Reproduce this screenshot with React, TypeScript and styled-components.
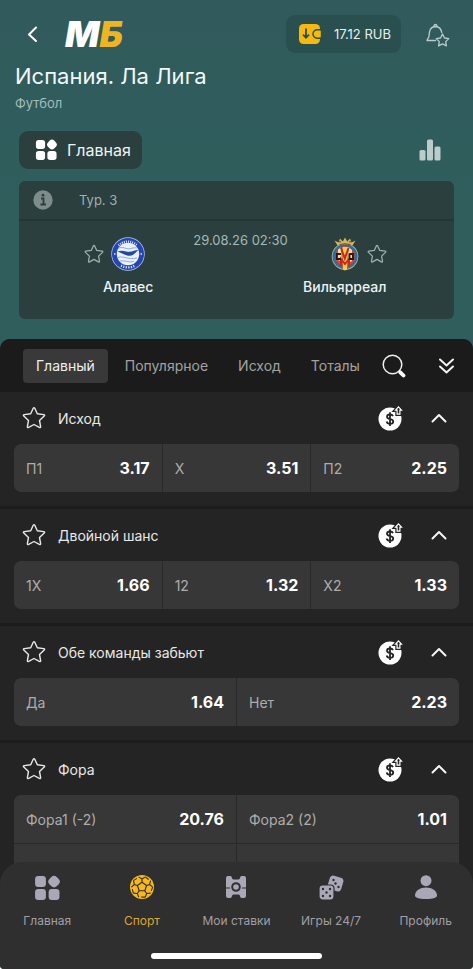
import React from 'react';
import styled, { createGlobalStyle, css } from 'styled-components';

const GlobalStyle = createGlobalStyle`
  *, *::before, *::after { box-sizing: border-box; }
  body { margin: 0; background: #fff; font-family: Inter, "Noto Sans", sans-serif; }
  button { font: inherit; color: inherit; background: none; border: 0; padding: 0; cursor: pointer; }
  h1, h2, p { margin: 0; font-weight: 400; }
  svg { display: block; flex: none; }
`;

const Page = styled.div`
  display: flex;
  flex-direction: column;
  height: 100vh;
  overflow: hidden;
  border-radius: 0 0 4px 4px;
  background: linear-gradient(#315a5b, #2f5e5d 200px, #2f5e5d);
  color: #fff;
`;

const TopBar = styled.header`
  display: flex;
  align-items: center;
  height: 53px;
  padding: 15px 23px 0 22px;
`;

const IconButton = styled.button`
  display: grid;
  place-items: center;
  flex: none;
`;

const Logo = styled.a`
  display: flex;
  margin-left: 22px;
  font-size: 36px;
  line-height: 38px;
  font-weight: 900;
  font-style: italic;
  color: #fff;
  text-decoration: none;
`;

const LogoAccent = styled.span`
  color: #eeb422;
`;

const Balance = styled.button`
  display: flex;
  align-items: center;
  gap: 12px;
  height: 38px;
  margin: 0 24px 0 auto;
  padding: 0 10px 0 12px;
  border-radius: 9px;
  background: #29504f;
  font-size: 13px;
  color: #e4eeee;
`;

const Heading = styled.div`
  padding: 9px 15px 0;
`;

const Title = styled.h1`
  font-size: 22px;
  line-height: 28px;
  color: #f0f8f8;
`;

const Sport = styled.p`
  padding-top: 5px;
  font-size: 13px;
  line-height: 16px;
  color: #a3bcbb;
`;

const ModeRow = styled.div`
  display: flex;
  align-items: center;
  justify-content: space-between;
  padding: 20px 32px 12px 19px;
`;

const ModeButton = styled.button`
  display: flex;
  align-items: center;
  gap: 10px;
  height: 38px;
  padding: 0 11px 0 16px;
  border-radius: 9px;
  background: #2a3f3e;
  font-size: 16px;
  color: #eef4f4;
`;

const MatchCard = styled.section`
  margin: 0 19px 20px;
  border-radius: 6px;
  background: #2a3f3e;
`;

const Round = styled.div`
  display: flex;
  align-items: center;
  gap: 26px;
  height: 40px;
  padding: 0 14px;
  border-bottom: 2px solid #253635;
  font-size: 13px;
  color: #9fb0af;
`;

const Teams = styled.div`
  display: flex;
  justify-content: center;
  gap: 12px;
  height: 98px;
  padding-top: 10px;
`;

const Team = styled.div`
  display: flex;
  flex-direction: column;
  align-items: center;
  width: 90px;
`;

const TeamBadges = styled.div<{ $away?: boolean }>`
  display: flex;
  align-items: center;
  gap: 7px;
  height: 46px;
  ${({ $away }) => ($away ? css`padding-left: 28px;` : css`padding-right: 28px;`)}
`;

const TeamName = styled.span`
  font-size: 14px;
  line-height: 20px;
  font-weight: 500;
  color: #edf2f2;
`;

const Kickoff = styled.time`
  padding-left: 8px;
  text-align: center;
  font-size: 13px;
  line-height: 18px;
  color: #a7b7b6;
  white-space: nowrap;
`;

const Sheet = styled.main`
  flex: 1;
  min-height: 0;
  overflow: hidden;
  border-radius: 10px 10px 0 0;
  background: #242424;
`;

const TabBar = styled.nav`
  display: flex;
  align-items: center;
  height: 53px;
  padding: 0 18px 0 23px;
  background: #1b1b1b;
`;

const Tabs = styled.div`
  display: flex;
  flex: 1;
  gap: 4px;
  overflow: hidden;
`;

const Tab = styled.button<{ $active?: boolean }>`
  flex: none;
  height: 34px;
  padding: 0 13px;
  border-radius: 4px;
  font-size: 14px;
  color: ${({ $active }) => ($active ? '#eee' : '#a2a2a2')};
  background: ${({ $active }) => ($active ? '#393939' : 'transparent')};
`;

const TabTools = styled.div`
  display: flex;
  align-items: center;
  gap: 32px;
`;

const Market = styled.section`
  padding: 0 14px 14px;
  border-bottom: 3px solid #1c1c1c;
`;

const MarketHead = styled.div`
  display: flex;
  align-items: center;
  gap: 12px;
  height: 52px;
  padding: 0 12px 0 8px;
`;

const MarketTitle = styled.h2`
  flex: 1;
  font-size: 14px;
  color: #e8e8e8;
`;

const MarketTools = styled.div`
  display: flex;
  align-items: center;
  gap: 28px;
`;

const Outcomes = styled.div<{ $columns: number }>`
  display: grid;
  grid-template-columns: repeat(${({ $columns }) => $columns}, 1fr);
  gap: 1px;
  border-radius: 7px;
  overflow: hidden;
  background: #292929;
`;

const Outcome = styled.button`
  display: flex;
  align-items: center;
  justify-content: space-between;
  height: 48px;
  padding: 0 12px;
  background: #373737;
`;

const OutcomeName = styled.span`
  font-size: 14px;
  color: #adadad;
`;

const Odds = styled.span`
  font-size: 16px;
  font-weight: 700;
  color: #fff;
`;

const BottomNav = styled.nav`
  position: relative;
  z-index: 1;
  flex: none;
  margin-top: -22px;
  border-radius: 22px 22px 0 0;
  background: #2f2f2f;
`;

const NavItems = styled.div`
  display: grid;
  grid-template-columns: repeat(5, 1fr);
  padding-top: 13px;
`;

const NavLink = styled.a<{ $active?: boolean }>`
  display: flex;
  flex-direction: column;
  align-items: center;
  gap: 14px;
  font-size: 12px;
  line-height: 16px;
  text-decoration: none;
  white-space: nowrap;
  color: ${({ $active }) => ($active ? '#dba735' : '#a09fa5')};
`;

const HomeIndicator = styled.div`
  width: 36%;
  height: 6px;
  margin: 24px auto 10px;
  border-radius: 3px;
  background: #fff;
`;

const STAR = 'M11.200 2.300q.8-1.400 1.600 0L15.300 7.700l6.400.9q1.600.3.500 1.500L17.500 14.500l1.100 6q.2 1.600-1.300.9L12 18.500l-5.300 2.900q-1.500.7-1.300-.9l1.100-6L1.800 10.100q-1.100-1.200.5-1.500l6.400-.9z';

const StarIcon = ({ size, color, width }: { size: number; color: string; width: number }) => (
  <svg width={size} height={size} viewBox="0 0 24 24" fill="none" stroke={color} strokeWidth={width} strokeLinejoin="round">
    <path d={STAR} />
  </svg>
);

const BackIcon = () => (
  <svg width="21" height="24" viewBox="0 0 21 24" fill="none" stroke="#fff" strokeWidth="2" strokeLinecap="round" strokeLinejoin="round">
    <path d="M14 5.500l-7 7 7 6.500" />
  </svg>
);

const WalletIcon = () => (
  <svg width="24" height="22" viewBox="0 0 24 22">
    <rect x="1" y="1" width="21" height="20" rx="4.500" fill="#f8b90f" />
    <path d="M8 5.500v9M5 11.700l3 3 3-3" fill="none" stroke="#29504f" strokeWidth="1.800" />
    <path d="M22 6.800h-2.800a4.200 4.200 0 0 0 0 8.400H22q1.500 0 1.500-1.500V8.300q0-1.500-1.500-1.500z" fill="#f8b90f" stroke="#29504f" strokeWidth="1.400" />
  </svg>
);

const BellIcon = () => (
  <svg width="25" height="25" viewBox="0 0 25 25" fill="none" stroke="#b9cccb" strokeWidth="1.300" strokeLinecap="round" strokeLinejoin="round">
    <path d="M10.500 18.500H2c.2-1.700 1.800-2.300 2-4.500C4.300 9 5 5 10.500 4.500c4 .2 5.700 2.700 6.200 6" />
    <path d="M9 4c.2-2 2.800-2 3 0" />
    <path d="M17.500 12l2 4 4.300.6-3.100 3 .7 4.300-3.900-2-3.900 2 .7-4.300-3.100-3 4.300-.6z" />
  </svg>
);

const GridIcon = ({ size, color }: { size: number; color: string }) => (
  <svg width={size} height={size} viewBox="0 0 24 24" fill={color}>
    <rect x="1" y="1" width="10" height="10" rx="3" />
    <rect x="13.700" y="1.300" width="9.600" height="9.600" rx="3.800" transform="rotate(45 18.500 6.100)" />
    <rect x="1" y="13" width="10" height="10" rx="3" />
    <rect x="13.500" y="13" width="10" height="10" rx="3" />
  </svg>
);

const ChartIcon = () => (
  <svg width="22" height="22" viewBox="0 0 22 22" fill="#bdcccb">
    <rect x="0.500" y="11" width="6" height="10.500" rx="1.500" />
    <rect x="8" y="0.500" width="6" height="21" rx="1.500" />
    <rect x="15.500" y="7.500" width="6" height="14" rx="1.500" />
  </svg>
);

const InfoIcon = () => (
  <svg width="20" height="20" viewBox="0 0 20 20">
    <circle cx="10" cy="10" r="9.700" fill="#7e8c8b" />
    <path d="M8 8.500h2.500V14M7.500 14.500h5.500" stroke="#2a3f3e" strokeWidth="1.800" fill="none" />
    <circle cx="10" cy="5.200" r="1.400" fill="#2a3f3e" />
  </svg>
);

const AlavesCrest = () => (
  <svg width="34" height="34" viewBox="0 0 34 34" role="img" aria-label="Алавес">
    <circle cx="17" cy="17" r="16.700" fill="#b9c9f2" />
    <circle cx="17" cy="17" r="16" fill="#2446b4" />
    <circle cx="17" cy="17" r="11.200" fill="#e9f0f8" />
    <path d="M6.500 14.500c5-2 8 .5 12 .3 4-.2 6-2.300 9.500-1.800-3 1-4.500 5.500-9 5.800-4 .2-7-2.500-12.500-4.300z" fill="#25489f" />
    <path d="M7 11.500c5-3 8 1.500 13 0 2-.6 4-1 6-.4M7 20.500c6-2 9 2.500 19 .5M9 24c5-1 8 2 14 .5" fill="none" stroke="#7d9bd0" strokeWidth=".8" />
    <path d="M7.600 8.600a12.900 12.900 0 0 1 18.800 0" fill="none" stroke="#dce6ff" strokeWidth="2.200" strokeDasharray="1 1.100" />
    <path d="M10 28.500a13.800 13.800 0 0 0 14 0" fill="none" stroke="#dce6ff" strokeWidth="2.400" strokeDasharray="1.200 1.300" />
    <path d="M3 17h1.500M29.500 17H31" stroke="#dce6ff" strokeWidth="1.500" />
  </svg>
);

const VillarrealCrest = () => (
  <svg width="30" height="34" viewBox="0 0 30 34" role="img" aria-label="Вильярреал">
    <circle cx="15" cy="19.500" r="13.300" fill="#b9b48a" />
    <circle cx="15" cy="19.500" r="12.500" fill="#2c6da5" />
    <path d="M15 8.500l9.500 6.500v8.500L15 33.500l-9.500-10V15z" fill="#d9452a" />
    <path d="M8 12.500l3-2 1 14.500-4-2zM18.500 10l3.500 3v11l-4 2z" fill="#ffe086" />
    <path d="M12.500 10h5.500L17 32.500l-2 1-2-1z" fill="#f8cf4d" />
    <path d="M11 11l3.800 10.500L18.500 11M11 29v-7l4 5 4-5v7" fill="none" stroke="#c9281d" strokeWidth="2" />
    <path d="M11 17H6.800v5H11M19.500 16.500v6M19.500 17h3.500v5h-3.500" fill="none" stroke="#20191c" strokeWidth="1.800" />
    <path d="M7.500 8.500L4.500 3.500l4 2L10 1.500l2.800 3L15 .5l2.200 4L20 1.500l1.500 4 4-2-3 5q-7.500-2.500-15 0z" fill="#cfb75c" />
    <path d="M9.500 7.500q5.500-1.500 11 0" stroke="#8b3c32" fill="none" />
    <circle cx="10" cy="4.700" r=".8" fill="#2a3f3e" /><circle cx="20" cy="4.700" r=".8" fill="#2a3f3e" />
  </svg>
);

const SearchIcon = () => (
  <svg width="24" height="24" viewBox="0 0 24 24" fill="none">
    <circle cx="10.500" cy="10.500" r="9.300" stroke="#eee" strokeWidth="1.500" />
    <path d="M18.300 18.300l3.200 3.200" stroke="#fff" strokeWidth="3.800" strokeLinecap="round" />
  </svg>
);

const DoubleChevronIcon = () => (
  <svg width="17" height="18" viewBox="0 0 17 18" fill="none" stroke="#f2f2f2" strokeWidth="2" strokeLinecap="round" strokeLinejoin="round">
    <path d="M2 2.500l6.500 6 6.500-6M2 9.500l6.500 6 6.500-6" />
  </svg>
);

const DollarIcon = () => (
  <svg width="25" height="26" viewBox="0 0 25 26">
    <circle cx="12" cy="14" r="11.500" fill="#fff" />
    <path d="M15 11.200c-.5-1.200-1.600-1.700-3-1.700-1.800 0-3 .9-3 2.300 0 3.300 6.200 1.400 6.200 4.600 0 1.500-1.300 2.400-3.200 2.400-1.700 0-3-.7-3.400-2.200M12 7.200v13.800" fill="none" stroke="#242424" strokeWidth="1.800" />
    <path d="M20.500 1.800l3 3.300h-1.600v4h-2.800v-4h-1.600z" fill="#242424" stroke="#242424" strokeWidth="3.600" />
    <path d="M20.500 1.800l3 3.300h-1.600v4h-2.800v-4h-1.600z" fill="#242424" stroke="#fff" strokeWidth="1.200" />
  </svg>
);

const ChevronUpIcon = () => (
  <svg width="16" height="10" viewBox="0 0 16 10" fill="none" stroke="#f5f5f5" strokeWidth="2" strokeLinecap="round" strokeLinejoin="round">
    <path d="M1.500 8.500L8 2l6.500 6.500" />
  </svg>
);

const spokes = [0, 72, 144, 216, 288];

const BallIcon = () => (
  <svg width="24" height="24" viewBox="0 0 24 24">
    <circle cx="12" cy="12" r="12" fill="#f5b91f" />
    <g fill="none" stroke="#332e24" strokeWidth="1.100" strokeLinejoin="round">
      <path d="M12 7.200l4.600 3.300-1.800 5.300H9.200l-1.800-5.300z" />
      {spokes.map((angle) => (
        <g key={angle} transform={`rotate(${angle} 12 12)`}>
          <path d="M12 7.200V4M12 4L8.600 1.900M12 4l3.400-2.100" />
          <path d="M15.400 1.900l3.200 2.600" />
        </g>
      ))}
    </g>
  </svg>
);

const TicketIcon = () => (
  <svg width="24" height="24" viewBox="0 0 24 24">
    <path d="M4 1h2.500C8 1 7.700 4.500 9.500 4.500h5C16.300 4.500 16 1 17.500 1H20q2 0 2 2v18q0 2-2 2h-2.500c-1.500 0-1.200-3.500-3-3.500h-5c-1.800 0-1.500 3.500-3 3.500H4q-2 0-2-2V3q0-2 2-2z" fill="#aaa8b7" />
    <circle cx="12" cy="12" r="3.800" fill="none" stroke="#2f2f2f" strokeWidth="2" />
    <path d="M2 13h4M18 13h4" stroke="#2f2f2f" strokeWidth="1.200" />
  </svg>
);

const DiceIcon = () => (
  <svg width="26" height="26" viewBox="0 0 26 26">
    <rect x="10.500" y="1.500" width="14" height="14" rx="3.500" transform="rotate(17 17.500 8.500)" fill="#aaa8b7" />
    <g fill="#2f2f2f">
      <circle cx="15.500" cy="5" r="1.200" /><circle cx="17.500" cy="8.500" r="1.200" /><circle cx="20.500" cy="12" r="1.200" />
    </g>
    <rect x="1" y="10" width="15" height="15" rx="3.500" fill="#aaa8b7" stroke="#2f2f2f" strokeWidth="1.200" />
    <g fill="#2f2f2f">
      <circle cx="5" cy="14" r="1.200" /><circle cx="12" cy="14" r="1.200" /><circle cx="8.500" cy="17.500" r="1.200" />
      <circle cx="5" cy="21" r="1.200" /><circle cx="12" cy="21" r="1.200" />
    </g>
  </svg>
);

const ProfileIcon = () => (
  <svg width="24" height="24" viewBox="0 0 24 24" fill="#aaa8b7">
    <circle cx="12" cy="5.700" r="5.500" />
    <path d="M1 20.500c0-5 5-8 11-8s11 3 11 8c0 2.300-3.500 3.500-11 3.500S1 22.800 1 20.500z" />
  </svg>
);

const tabs = ['Главный', 'Популярное', 'Исход', 'Тоталы'];

const markets = [
  { title: 'Исход', columns: 3, outcomes: [['П1', '3.17'], ['X', '3.51'], ['П2', '2.25']] },
  { title: 'Двойной шанс', columns: 3, outcomes: [['1X', '1.66'], ['12', '1.32'], ['X2', '1.33']] },
  { title: 'Обе команды забьют', columns: 2, outcomes: [['Да', '1.64'], ['Нет', '2.23']] },
  { title: 'Фора', columns: 2, outcomes: [['Фора1 (-2)', '20.76'], ['Фора2 (2)', '1.01'], ['', ''], ['', '']] },
];

const navItems = [
  { label: 'Главная', icon: <GridIcon size={26} color="#aaa8b7" /> },
  { label: 'Спорт', icon: <BallIcon />, active: true },
  { label: 'Мои ставки', icon: <TicketIcon /> },
  { label: 'Игры 24/7', icon: <DiceIcon /> },
  { label: 'Профиль', icon: <ProfileIcon /> },
];

const NavIcon = styled.span`
  display: grid;
  place-items: center;
  height: 24px;
`;

export default function App() {
  return (
    <>
      <GlobalStyle />
      <Page>
        <TopBar>
          <IconButton aria-label="Назад"><BackIcon /></IconButton>
          <Logo href="#home">М<LogoAccent>Б</LogoAccent></Logo>
          <Balance><WalletIcon />17.12 RUB</Balance>
          <IconButton aria-label="Уведомления"><BellIcon /></IconButton>
        </TopBar>
        <Heading>
          <Title>Испания. Ла Лига</Title>
          <Sport>Футбол</Sport>
        </Heading>
        <ModeRow>
          <ModeButton><GridIcon size={22} color="#fff" />Главная</ModeButton>
          <IconButton aria-label="Статистика"><ChartIcon /></IconButton>
        </ModeRow>
        <MatchCard>
          <Round><InfoIcon />Тур. 3</Round>
          <Teams>
            <Team>
              <TeamBadges>
                <IconButton aria-label="Алавес в избранное"><StarIcon size={20} color="#9fb0af" width={1.5} /></IconButton>
                <AlavesCrest />
              </TeamBadges>
              <TeamName>Алавес</TeamName>
            </Team>
            <Kickoff>29.08.26 02:30</Kickoff>
            <Team>
              <TeamBadges $away>
                <VillarrealCrest />
                <IconButton aria-label="Вильярреал в избранное"><StarIcon size={20} color="#9fb0af" width={1.5} /></IconButton>
              </TeamBadges>
              <TeamName>Вильярреал</TeamName>
            </Team>
          </Teams>
        </MatchCard>
        <Sheet>
          <TabBar>
            <Tabs>
              {tabs.map((tab, i) => <Tab key={tab} $active={i === 0}>{tab}</Tab>)}
            </Tabs>
            <TabTools>
              <IconButton aria-label="Поиск"><SearchIcon /></IconButton>
              <IconButton aria-label="Развернуть все"><DoubleChevronIcon /></IconButton>
            </TabTools>
          </TabBar>
          {markets.map((market) => (
            <Market key={market.title}>
              <MarketHead>
                <IconButton aria-label={`${market.title} в избранное`}><StarIcon size={24} color="#e8e8e8" width={1.4} /></IconButton>
                <MarketTitle>{market.title}</MarketTitle>
                <MarketTools>
                  <DollarIcon />
                  <IconButton aria-label={`Свернуть ${market.title}`}><ChevronUpIcon /></IconButton>
                </MarketTools>
              </MarketHead>
              <Outcomes $columns={market.columns}>
                {market.outcomes.map(([name, odds], i) => (
                  <Outcome key={i}>
                    <OutcomeName>{name}</OutcomeName>
                    <Odds>{odds}</Odds>
                  </Outcome>
                ))}
              </Outcomes>
            </Market>
          ))}
        </Sheet>
        <BottomNav>
          <NavItems>
            {navItems.map((item) => (
              <NavLink key={item.label} href="#" $active={item.active}>
                <NavIcon>{item.icon}</NavIcon>
                {item.label}
              </NavLink>
            ))}
          </NavItems>
          <HomeIndicator />
        </BottomNav>
      </Page>
    </>
  );
}
